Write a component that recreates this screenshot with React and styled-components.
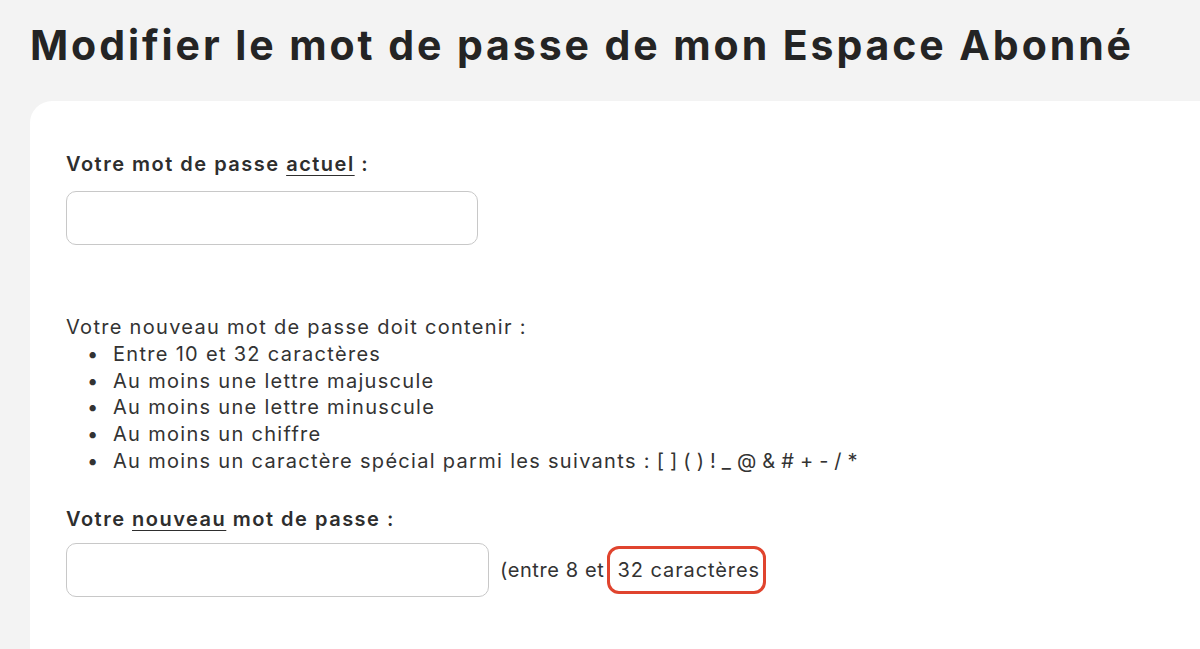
import React from 'react';
import styled, { createGlobalStyle } from 'styled-components';

const GlobalStyle = createGlobalStyle`
  html, body {
    margin: 0;
    padding: 0;
    background: #f3f3f3;
    font-family: Inter, "Noto Sans", sans-serif;
    color: #2b2b2b;
  }
  body {
    height: 649px;
    overflow: hidden;
  }
`

const Page = styled.div`
  padding: 17px 0 0 30px;
`

const Title = styled.h1`
  margin: 0 0 28px 0;
  font-size: 41px;
  font-weight: 700;
  color: #242424;
  letter-spacing: 2.92px;
  line-height: 56px;
  white-space: nowrap;
`

const Card = styled.div`
  box-sizing: border-box;
  height: 548px;
  background: #fff;
  border-top-left-radius: 22px;
  padding: 50px 36px 0 36px;
`

const Label = styled.div`
  font-size: 20px;
  line-height: 27px;
  font-weight: 600;
  letter-spacing: 1.5px;
  color: #2e2e2e;
  margin-bottom: ${p => p.$gap || 13}px;
  u {
    text-decoration-thickness: 1px;
    text-underline-offset: 4px;
  }
`

const Row = styled.div`
  display: flex;
  align-items: center;
  gap: 11px;
`

const Input = styled.input`
  width: ${p => p.$width}px;
  height: 54px;
  box-sizing: border-box;
  border: 1px solid #c8c8c8;
  border-radius: 10px;
  background: #fff;
  outline: none;
`

const Rules = styled.div`
  margin: 69px 0 31px 0;
  font-size: 20px;
  line-height: 26.8px;
  letter-spacing: 1.3px;
  color: #333;
`

const List = styled.ul`
  margin: 0;
  padding: 0 0 0 21px;
  list-style: none;
`

const Item = styled.li`
  display: flex;
  &::before {
    content: '•';
    width: 26px;
    flex-shrink: 0;
  }
`

const Symbols = styled.span`
  letter-spacing: 0.2px;
  margin-left: 6px;
`

const Hint = styled.span`
  font-size: 20px;
  letter-spacing: 0.6px;
  color: #333;
`

const Circled = styled.span`
  display: inline-block;
  border: 3px solid #e0442e;
  border-radius: 12px;
  padding: 9px 3px 9px 8px;
  margin-left: -4px;
  letter-spacing: 0.9px;
`

const rules = [
  'Entre 10 et 32 caractères',
  'Au moins une lettre majuscule',
  'Au moins une lettre minuscule',
  'Au moins un chiffre',
];

export default function App() {
  return (
    <>
      <GlobalStyle />
      <Page>
        <Title>Modifier le mot de passe de mon Espace Abonné</Title>
        <Card>
          <Label>Votre mot de passe <u>actuel</u> :</Label>
          <Input type="password" $width={412} />
          <Rules>
            Votre nouveau mot de passe doit contenir :
            <List>
              {rules.map(r => <Item key={r}>{r}</Item>)}
              <Item>
                Au moins un caractère spécial parmi les suivants :
                <Symbols>[ ] ( ) ! _ @ &amp; # + - / *</Symbols>
              </Item>
            </List>
          </Rules>
          <Label $gap={10}>Votre <u>nouveau</u> mot de passe :</Label>
          <Row>
            <Input type="password" $width={423} />
            <Hint>(entre 8 et <Circled>32 caractères</Circled></Hint>
          </Row>
        </Card>
      </Page>
    </>
  );
}
